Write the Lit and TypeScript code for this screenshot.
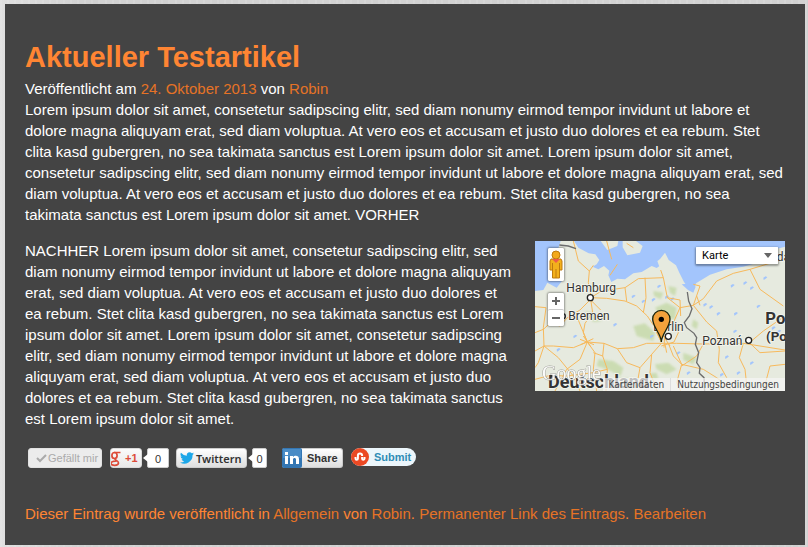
import { LitElement, html, css, svg } from "lit";
import { customElement } from "lit/decorators.js";

const ROADS = [
  "M130 15 L145 75 L178 105 L175 140 L182 175",
  "M178 105 L190 88",
  "M182 185 L230 187 L285 195 L320 210 L352 240 L372 270 L394 318",
  "M182 190 L150 222 L112 245 L90 270 L60 262 L40 280 L15 290",
  "M182 190 L188 230 L165 262 L160 290 L172 318",
  "M185 195 L212 222",
  "M112 245 L140 240 L172 318",
  "M172 318 L130 335 L70 330 L42 330 L15 345",
  "M42 330 L40 275 L48 215 L15 212",
  "M42 330 L25 380 L15 395",
  "M42 330 L85 365 L130 420 L150 465",
  "M172 318 L222 322 L262 338 L310 335 L350 322 L394 322 L440 322 L520 324 L640 322 L765 342",
  "M172 318 L195 350 L190 400 L200 465",
  "M172 318 L150 370 L110 400 L75 465",
  "M222 322 L218 360 L232 400 L228 465",
  "M262 338 L290 380 L330 395 L322 440 L300 465",
  "M218 360 L190 350",
  "M394 322 L365 355 L330 395",
  "M365 355 L360 410 L382 465",
  "M415 322 L430 360 L455 385 L520 400 L560 425 L610 465",
  "M430 330 L455 385 L440 440 L452 465",
  "M394 318 L380 290 L392 262 L430 258 L445 290 L432 318 L394 330",
  "M400 300 L420 330 M402 335 L404 300 M410 350 L405 325",
  "M430 260 L450 215 L490 208 L510 150 L490 145",
  "M450 215 L412 185 L400 125 L325 128 L285 155 L215 165 L182 185",
  "M285 155 L290 195",
  "M345 125 L348 185 L340 230",
  "M400 125 L392 102",
  "M412 185 L450 192 L452 240",
  "M490 208 L530 258 L560 285 L568 340 L565 380 L590 425",
  "M490 208 L520 188 L560 135 L610 112 L660 100 L765 68",
  "M500 180 L510 208",
  "M656 322 L700 285 L765 240",
  "M640 322 L628 365 L645 400 L652 465",
  "M656 318 L690 350 L765 345",
  "M700 465 L720 390 L765 385",
  "M520 324 L500 360 L455 390",
  "M15 430 L60 418 L110 420 L190 410 L232 400",
  "M230 15 L245 70 M290 22 L310 35",
  "M660 100 L690 160 L760 210",
  "M240 118 L262 85",
];

const FORESTS = [
  "M205 370 L250 375 L280 395 L272 420 L230 400 L200 390Z",
  "M262 425 L330 430 L320 455 L270 445Z",
  "M375 215 L410 200 L440 215 L435 250 L395 245Z",
  "M310 270 L345 262 L375 290 L370 315 L320 300Z",
  "M375 385 L415 380 L440 400 L410 415 L380 400Z",
  "M370 165 L400 170 L392 190 L372 180Z",
  "M415 150 L440 155 L435 180 L420 170Z",
  "M165 225 L190 232 L215 255 L190 258Z",
  "M490 250 L505 260 L500 280 L485 270Z",
  "M460 350 L500 365 L490 385 L460 372Z",
  "M360 412 L380 410 L385 430 L365 428Z",
];

const LAKES = [
  [305, 180], [335, 195], [365, 190], [382, 150], [405, 182], [422, 188],
  [520, 205], [538, 212], [602, 148], [640, 140], [660, 155], [700, 125],
  [560, 232], [612, 232], [680, 210], [610, 285], [725, 275], [742, 285],
  [585, 362], [660, 380], [570, 415], [80, 340], [130, 300], [250, 265],
  [300, 440], [440, 350], [470, 410], [360, 300], [240, 150], [620, 410],
];

@customElement("region-map")
class RegionMap extends LitElement {
  static styles = css`
    :host { display: block; position: relative; height: 150px; overflow: hidden; background: #e6eadf; font-family: Roboto, sans-serif; }
    .tiles { display: block; width: 100%; height: 100%; }
    .road { fill: none; stroke: #f7b95c; stroke-width: 3; stroke-linejoin: round; }
    .forest { fill: #c5d9a8; opacity: 0.8; filter: blur(3px); }
    .water { fill: #a3c5fc; }
    .border { fill: none; stroke: #6d6d6d; stroke-width: 4; }
    .town { fill: #fff; stroke: #222; stroke-width: 4; }
    .place { font-size: 36px; fill: #333; stroke: #f4f5ee; stroke-width: 5; paint-order: stroke; }
    .land { font-weight: 700; fill: #333; stroke: #f4f5ee; stroke-width: 5; paint-order: stroke; }
    .logo { font-family: "Liberation Serif", serif; font-size: 60px; fill: #fff; stroke: #9a9a94; stroke-width: 3; paint-order: stroke; opacity: 0.9; }
    button, select { font-family: inherit; margin: 0; padding: 0; border: 0; background: #fff; color: #000; }
    .tools { position: absolute; left: 13px; top: 7px; width: 16px; display: grid; gap: 12px; }
    .card { background: #fff; border-radius: 2px; box-shadow: 0 0 2px 1px rgba(0, 0, 0, 0.35); display: grid; }
    .person { height: 33px; border-radius: 2px; display: grid; place-items: center; }
    .zoom { height: 16px; display: grid; place-items: center; border-radius: 2px; }
    .zoom + .zoom { border-top: 1px solid #ccc; height: 17px; }
    .type { position: absolute; right: 7px; top: 6px; display: flex; align-items: center; box-shadow: 0 1px 2px 1px rgba(0, 0, 0, 0.35); border-radius: 1px; background: #fff; }
    select { appearance: none; width: 82px; height: 17px; padding-left: 6px; font-size: 11px; border-radius: 1px; }
    .arrow { position: absolute; right: 6px; pointer-events: none; }
    .legal { position: absolute; right: 0; bottom: 0; display: flex; height: 13px; line-height: 13px; font-size: 10px; background: rgba(245, 245, 245, 0.72); }
    .legal a { color: #444; text-decoration: none; padding: 0 6px; font-family: "DejaVu Sans Condensed", "DejaVu Sans", sans-serif; }
    .legal a + a { border-left: 1px solid #ddd; }
  `;

  render() {
    return html`
      <svg class="tiles" viewBox="15 15 750 450" preserveAspectRatio="xMidYMid slice" role="img" aria-label="Karte">
        <path class="water" d="M15 15H92L84 40L96 72L84 100L96 135L80 155L52 140L40 162L15 165Z"/>
        <path class="water" d="M132 15L145 35L176 52L196 55L208 72L200 85L188 92L205 100L222 90L238 104L235 118L244 138L262 128L285 130L310 112L335 108L365 90L380 96L392 88L388 72L405 50L416 72L438 88L448 110L462 138L478 160L492 160L498 142L540 116L590 100L640 92L690 78L720 55L735 40L765 32V15Z"/>
        <path class="water" d="M455 145L488 142L497 152L490 170L474 162Z"/>
        <path d="M212 15L232 42L262 30L265 15Z M278 34L292 58L330 50L338 30L318 15H278Z M382 75L405 60L420 80L405 95L388 92Z" fill="#e6eadf"/>
        ${FORESTS.map((d) => svg`<path class="forest" d=${d}/>`)}
        ${LAKES.map(([x, y]) => svg`<path class="water" d=${`M${x} ${y}l7 -4l5 3l-6 5l-5 3z`}/>`)}
        ${ROADS.map((d) => svg`<path class="road" d=${d}/>`)}
        <path class="road" d="M150 310L192 326M152 326L190 308M160 300L182 332"/>
        <path class="border" d="M88 27L115 30L138 38"/>
        <path class="border" d="M472 168L476 195L486 218L478 240L463 260L470 275L492 292L500 305L496 325L506 350L500 380L510 395L508 412L522 425L524 465"/>
        <circle class="town" cx="98" cy="241" r="8"/>
        <text class="place" x="109" y="169">Hamburg</text>
        <text class="place" x="115" y="253">Bremen</text>
        <text class="place" x="370" y="285">Berlin</text>
        <text class="place" x="517" y="327">Poznań</text>
        <text class="place" x="740" y="74">da</text>
        <text class="land" x="706" y="263" font-size="50">Po</text>
        <text class="land" x="708" y="314" font-size="40">(Po</text>
        <text class="land" x="54" y="457" font-size="54">Deutschland</text>
        <circle class="town" cx="181" cy="185" r="9"/>
        <circle class="town" cx="415" cy="301" r="9"/>
        <circle class="town" cx="656" cy="313" r="9"/>
        <path d="M394 318C394 294 368 274 368 249A26 26 0 0 1 420 249C420 274 394 294 394 318Z" fill="#f2a23c" stroke="#18230c" stroke-width="4"/>
        <circle cx="394" cy="250" r="8"/>
        <text class="logo" x="36" y="431">Google</text>
      </svg>
      <div class="tools">
        <div class="card">
          <button class="person" aria-label="Street View">
            <svg width="14" height="29" viewBox="0 0 14 29">
              <path d="M2 9H12L13 11V20H10.500V28H3.500V20H1V11Z" fill="#f3b01c" stroke="#bd7a10"/>
              <circle cx="7" cy="5" r="4" fill="#f3a91c" stroke="#bd7a10"/>
              <path d="M3 9H11L7 13Z" fill="#ee5a4c"/><path d="M7 19V28M3.500 13V20M10.500 13V20" stroke="#bd7a10"/>
            </svg>
          </button>
        </div>
        <div class="card">
          <button class="zoom" aria-label="Vergrößern"><svg width="8" height="8"><path d="M0 4H8M4 0V8" stroke="#666" stroke-width="2"/></svg></button>
          <button class="zoom" aria-label="Verkleinern"><svg width="8" height="8"><path d="M0 4H8" stroke="#666" stroke-width="2"/></svg></button>
        </div>
      </div>
      <div class="type">
        <select aria-label="Kartentyp"><option>Karte</option></select>
        <svg class="arrow" width="8" height="5"><path d="M0 0H8L4 5Z" fill="#666"/></svg>
      </div>
      <div class="legal"><a href="#daten">Kartendaten</a><a href="#nutzung">Nutzungsbedingungen</a></div>
    `;
  }
}

@customElement("share-bar")
class ShareBar extends LitElement {
  static styles = css`
    :host { display: flex; height: 20px; padding-left: 3px; font-family: "Liberation Sans", sans-serif; }
    button { display: flex; align-items: center; margin: 0; height: 20px; box-sizing: border-box; border: 1px solid #ccc; border-radius: 3px; background: linear-gradient(#fff, #dedede); font: 11px "Liberation Sans", sans-serif; color: #333; padding: 0; white-space: nowrap; }
    .like { width: 74px; padding-left: 7px; gap: 1px; background: #ececec; border-color: #e2e2e2; color: #aaa; margin-right: 8px; }
    .plus { width: 32px; overflow: hidden; color: #dd4b39; font-weight: 700; gap: 4px; border-color: #d9d9d9; background: linear-gradient(#fafafa, #e8e8e8); }
    .count { position: relative; height: 20px; box-sizing: border-box; display: grid; place-items: center; background: #fff; border: 1px solid #ccc; border-radius: 2px; font-size: 11px; color: #333; margin-left: 5px; }
    .count::before { content: ""; position: absolute; left: -5px; top: 5px; border: 4px solid transparent; border-left: 0; border-right: 5px solid #fff; }
    .wide { width: 22px; margin-right: 7px; }
    .slim { width: 15px; margin-right: 15px; }
    .tweet { width: 71px; padding-left: 3px; gap: 2px; font-family: "Noto Sans", sans-serif; font-weight: 600; }
    .linked { width: 61px; border-color: #ccc; border-left: 0; gap: 5px; font-weight: 700; margin-right: 8px; }
    .submit { width: 65px; height: 18px; border: 0; border-radius: 9px; background: #ecf6fb; color: #2f8cb5; font-weight: 700; gap: 5px; }
    svg { flex: none; }
  `;

  render() {
    return html`
      <button class="like"><svg width="11" height="10"><path d="M1 5L4 8L10 2" fill="none" stroke="#aaa" stroke-width="2"/></svg>Gefällt mir</button>
      <button class="plus" aria-label="Google +1">
        <svg width="10" height="18" viewBox="0 0 10 18"><g fill="none" stroke="#dd4b39" stroke-width="1.700"><ellipse cx="3.500" cy="6.500" rx="2.600" ry="3"/><path d="M3 3.500H9.500M4.500 9.500C2.500 11 7.500 11 7.500 14C7.500 17 0 17 0 14.500C0 12 4 12 6 12"/></g></svg>+1
      </button>
      <span class="count wide">0</span>
      <button class="tweet">
        <svg width="14" height="12" viewBox="0 0 24 20"><path fill="#1da7e8" d="M24 2.400a10 10 0 0 1-2.800.8A5 5 0 0 0 23.300.500a10 10 0 0 1-3.100 1.200A4.900 4.900 0 0 0 11.800 6.200 14 14 0 0 1 1.700 1a4.900 4.900 0 0 0 1.500 6.600A5 5 0 0 1 1 7a4.900 4.900 0 0 0 4 4.900 5 5 0 0 1-2.300.1 4.900 4.900 0 0 0 4.600 3.400A10 10 0 0 1 0 17.500 14 14 0 0 0 21.500 5 10 10 0 0 0 24 2.400Z"/></svg>Twittern
      </button>
      <span class="count slim">0</span>
      <button class="linked">
        <svg width="20" height="20" viewBox="0 0 20 20"><rect width="20" height="20" rx="2" fill="#3376b3"/><rect x="1" y="1" width="18" height="9" fill="#4a8cc6"/><path fill="#fff" d="M3 8h3v8H3zM3 4h3v3H3zM8 8h3v1.200C12.500 7 17 7.200 17 11v5h-3v-4.500c0-2-3-2-3 0V16H8z"/></svg>Share
      </button>
      <button class="submit">
        <svg width="18" height="18" viewBox="0 0 18 18"><circle cx="9" cy="9" r="9" fill="#eb4924"/><path d="M4.500 9V10.500a1.200 1.200 0 0 0 2.400 0V7.500a2.100 2.100 0 0 1 4.200 0V8M11.100 9V10.500a1.200 1.200 0 0 0 2.400 0V9" fill="none" stroke="#fff" stroke-width="2"/></svg>Submit
      </button>
    `;
  }
}

@customElement("app-root")
class AppRoot extends LitElement {
  static styles = css`
    :host { display: block; box-sizing: border-box; min-height: 100vh; padding: 4px 3px 2px 5px; background: repeating-linear-gradient(90deg, rgba(255, 255, 255, 0.1) 0 2px, transparent 2px 7px), linear-gradient(90deg, #e0e0e0, #d2d2d2 10%, #d2d2d2); }
    article { background: #444; color: #fff; padding: 35px 20px 21px; font: 15px/21px "Liberation Sans", Arial, sans-serif; }
    h1 { margin: 0 0 3px; font-size: 29px; line-height: 36px; color: #ff8533; }
    p { margin: 0 0 15px; }
    .meta { margin: 0; }
    a { color: #e67326; text-decoration: none; }
    .split { display: flex; justify-content: space-between; align-items: flex-start; gap: 20px; margin-bottom: 19px; }
    .split p { margin: 0; flex: 1; }
    region-map { flex: 0 0 250px; margin-top: 1px; }
    footer { margin-top: 35px; color: #ff8533; }
  `;

  render() {
    return html`
      <article>
        <h1>Aktueller Testartikel</h1>
        <p class="meta">Veröffentlicht am <a href="#datum">24. Oktober 2013</a> von <a href="#robin">Robin</a></p>
        <p>
          Lorem ipsum dolor sit amet, consetetur sadipscing elitr, sed diam nonumy eirmod tempor invidunt ut labore et<br />
          dolore magna aliquyam erat, sed diam voluptua. At vero eos et accusam et justo duo dolores et ea rebum. Stet<br />
          clita kasd gubergren, no sea takimata sanctus est Lorem ipsum dolor sit amet. Lorem ipsum dolor sit amet,<br />
          consetetur sadipscing elitr, sed diam nonumy eirmod tempor invidunt ut labore et dolore magna aliquyam erat, sed<br />
          diam voluptua. At vero eos et accusam et justo duo dolores et ea rebum. Stet clita kasd gubergren, no sea<br />
          takimata sanctus est Lorem ipsum dolor sit amet. VORHER
        </p>
        <div class="split">
          <p>
            NACHHER Lorem ipsum dolor sit amet, consetetur sadipscing elitr, sed<br />
            diam nonumy eirmod tempor invidunt ut labore et dolore magna aliquyam<br />
            erat, sed diam voluptua. At vero eos et accusam et justo duo dolores et<br />
            ea rebum. Stet clita kasd gubergren, no sea takimata sanctus est Lorem<br />
            ipsum dolor sit amet. Lorem ipsum dolor sit amet, consetetur sadipscing<br />
            elitr, sed diam nonumy eirmod tempor invidunt ut labore et dolore magna<br />
            aliquyam erat, sed diam voluptua. At vero eos et accusam et justo duo<br />
            dolores et ea rebum. Stet clita kasd gubergren, no sea takimata sanctus<br />
            est Lorem ipsum dolor sit amet.
          </p>
          <region-map></region-map>
        </div>
        <share-bar></share-bar>
        <footer>
          Dieser Eintrag wurde veröffentlicht in <a href="#allgemein">Allgemein</a> von <a href="#robin">Robin</a>. <a href="#permalink">Permanenter Link des Eintrags</a>. <a href="#bearbeiten">Bearbeiten</a>
        </footer>
      </article>
    `;
  }
}
